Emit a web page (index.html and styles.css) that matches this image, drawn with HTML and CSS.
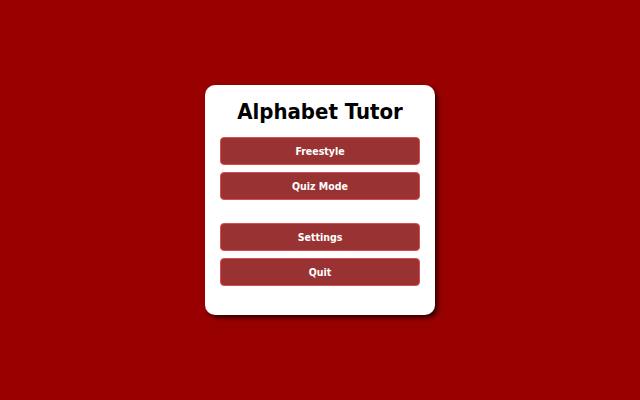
FILE: index.html
```html
<!DOCTYPE html>
<html>
<head>
<meta charset="utf-8">
<link rel="stylesheet" href="styles.css">
</head>
<body>
<div class="stage">
  <div class="card">
    <h1 class="title">Alphabet Tutor</h1>
    <div class="group">
      <button class="btn">Freestyle</button>
      <button class="btn">Quiz Mode</button>
    </div>
    <div class="group group-second">
      <button class="btn">Settings</button>
      <button class="btn">Quit</button>
    </div>
  </div>
</div>
</body>
</html>
```

FILE: styles.css
```css
html, body {
  margin: 0;
  padding: 0;
  background: #990000;
}
.stage {
  width: 640px;
  height: 400px;
  display: flex;
  align-items: center;
  justify-content: center;
}
.card {
  box-sizing: border-box;
  width: 230px;
  height: 230px;
  background: #ffffff;
  border-radius: 10px;
  box-shadow: 3px 3px 4px rgba(40, 0, 0, 0.85);
  padding: 12px 15px 0;
  display: flex;
  flex-direction: column;
  font-family: "DejaVu Sans Condensed", "DejaVu Sans", Verdana, sans-serif;
}
.title {
  margin: 0 0 10px;
  font-size: 22px;
  line-height: 30px;
  font-weight: bold;
  text-align: center;
  color: #000000;
}
.group {
  display: flex;
  flex-direction: column;
  gap: 7px;
}
.group-second {
  margin-top: 23px;
}
.btn {
  box-sizing: border-box;
  width: 200px;
  height: 28px;
  margin: 0;
  padding: 0;
  background: #993333;
  border: 1px solid #d65050;
  border-radius: 4px;
  color: #ffffff;
  font-family: "DejaVu Sans Condensed", "DejaVu Sans", Verdana, sans-serif;
  font-size: 10.5px;
  font-weight: bold;
  text-align: center;
}
```
